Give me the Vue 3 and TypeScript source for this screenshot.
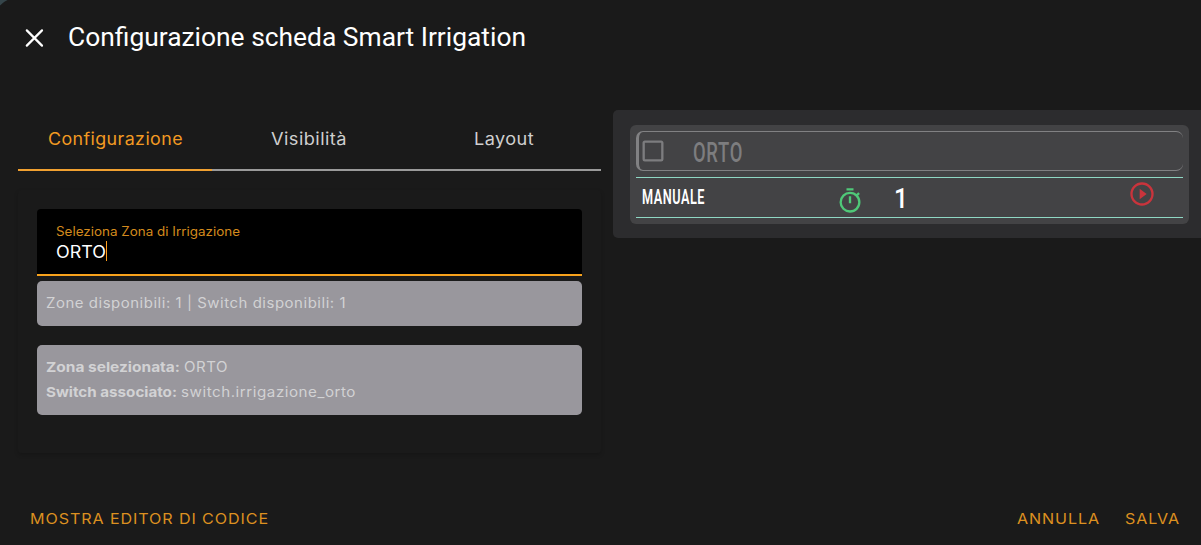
<script setup lang="ts">
import type { Directive } from 'vue'

interface Tab {
  label: string
  width: number
  active: boolean
}

const tabs: Tab[] = [
  { label: 'Configurazione', width: 135, active: true },
  { label: 'Visibilità', width: 76, active: false },
  { label: 'Layout', width: 60, active: false },
]

// Stretches or condenses a label to the given width in pixels.
const vFit: Directive<HTMLElement, number> = {
  mounted(el, { value }) {
    const natural = el.getBoundingClientRect().width
    el.style.width = `${value}px`
    el.style.transform = `scaleX(${value / natural})`
  },
}
</script>

<template>
  <div class="dialog">
    <svg class="corner" width="8" height="6" viewBox="0 0 8 6"><path d="M0 0H7.5Q3 2 0 5.5Z" /></svg>

    <header class="header">
      <svg class="close" viewBox="0 0 28 28"><path d="M6.8 6.4 22 21.6M22 6.4 6.8 21.6" /></svg>
      <h1><span v-fit="458" class="fit">Configurazione scheda Smart Irrigation</span></h1>
    </header>

    <main class="body">
      <section class="editor">
        <nav class="tabs">
          <div v-for="t in tabs" :key="t.label" class="tab" :class="{ active: t.active }">
            <span v-fit="t.width" class="fit">{{ t.label }}</span>
          </div>
        </nav>
        <div class="panel">
          <div class="field">
            <div class="label"><span v-fit="184" class="fit">Seleziona Zona di Irrigazione</span></div>
            <div class="value"><span v-fit="50" class="fit">ORTO</span><i class="caret"></i></div>
          </div>
          <div class="info counts"><span v-fit="300" class="fit">Zone disponibili: 1 | Switch disponibili: 1</span></div>
          <div class="info selection">
            <div class="line"><b v-fit="134" class="fit">Zona selezionata:</b><span v-fit="44" class="fit">ORTO</span></div>
            <div class="line"><b v-fit="131" class="fit">Switch associato:</b><span v-fit="175" class="fit">switch.irrigazione_orto</span></div>
          </div>
        </div>
      </section>

      <aside class="preview">
        <div class="card">
          <div class="zone">
            <svg class="icon" viewBox="0 0 24 24"><path d="M19,3H5C3.89,3 3,3.89 3,5V19A2,2 0 0,0 5,21H19A2,2 0 0,0 21,19V5C21,3.89 20.1,3 19,3M19,5V19H5V5H19Z" /></svg>
            <span v-fit="50" class="fit zone-name">ORTO</span>
          </div>
          <div class="manual">
            <div class="manual-name"><span v-fit="63" class="fit">MANUALE</span></div>
            <svg class="icon timer" viewBox="0 0 24 24"><path d="M12,20A7,7 0 0,1 5,13A7,7 0 0,1 12,6A7,7 0 0,1 19,13A7,7 0 0,1 12,20M19.03,7.39L20.45,5.97C20,5.46 19.55,5 19.04,4.56L17.62,6C16.07,4.74 14.12,4 12,4A9,9 0 0,0 3,13A9,9 0 0,0 12,22C17,22 21,17.97 21,13C21,10.88 20.26,8.93 19.03,7.39M11,14H13V8H11M15,1H9V3H15V1Z" /></svg>
            <span v-fit="14" class="fit minutes">1</span>
            <svg class="icon play" viewBox="0 0 24 24"><path d="M12,20C7.59,20 4,16.41 4,12C4,7.59 7.59,4 12,4C16.41,4 20,7.59 20,12C20,16.41 16.41,20 12,20M12,2A10,10 0 0,0 2,12A10,10 0 0,0 12,22A10,10 0 0,0 22,12A10,10 0 0,0 12,2M10,16.5L16,12L10,7.5V16.5Z" /></svg>
          </div>
        </div>
      </aside>
    </main>

    <footer class="footer">
      <span v-fit="239" class="fit">MOSTRA EDITOR DI CODICE</span>
      <span v-fit="83" class="fit cancel">ANNULLA</span>
      <span v-fit="55" class="fit">SALVA</span>
    </footer>
  </div>
</template>

<style>
html,
body {
  margin: 0;
  background: #1a1a1a;
}
</style>

<style scoped>
.dialog {
  position: relative;
  display: flex;
  flex-direction: column;
  width: 1201px;
  height: 545px;
  overflow: hidden;
  box-sizing: border-box;
  background: #1a1a1a;
  font-family: Inter, "Open Sans", sans-serif;
}
.corner {
  position: absolute;
  top: 0;
  left: 0;
  fill: #35454a;
}
.fit {
  display: inline-block;
  flex: none;
  white-space: nowrap;
  transform-origin: 0 50%;
}
.header {
  display: flex;
  align-items: center;
  height: 75px;
  padding-left: 20px;
  margin-bottom: 35px;
}
.close {
  width: 28px;
  height: 28px;
  margin-top: 1px;
  fill: none;
  stroke: #fff;
  stroke-width: 2.2;
  stroke-linecap: round;
}
h1 {
  margin: -1px 0 0 20px;
  font: 400 26px/36px Roboto, sans-serif;
  color: #fff;
}
.body {
  display: flex;
  flex: 1;
  align-items: flex-start;
  gap: 12px;
  padding-left: 18px;
}
.editor {
  width: 583px;
}
.tabs {
  display: flex;
}
.tab {
  display: flex;
  flex: 1;
  align-items: center;
  justify-content: center;
  height: 61px;
  padding-bottom: 1px;
  box-sizing: border-box;
  border-bottom: 2px solid #9a9a9a;
  font-size: 17px;
  letter-spacing: 0.4px;
  color: #cfcfcf;
}
.tab.active {
  border-color: #f0a030;
  color: #f39a22;
}
.panel {
  height: 244px;
  margin-top: 19px;
  padding: 19px 19px 0;
  border-radius: 4px;
  box-shadow: 0 2px 4px rgba(0, 0, 0, 0.18);
}
.field {
  height: 65px;
  border-bottom: 2px solid #f8a21c;
  border-radius: 4px 4px 0 0;
  background: #000;
  padding: 0 19px;
}
.label {
  padding-top: 13px;
  height: 19px;
  font-size: 12.5px;
  line-height: 19px;
  color: #d38a1d;
}
.value {
  display: flex;
  height: 20px;
  font-size: 16.6px;
  line-height: 22px;
  color: #fff;
}
.caret {
  width: 1px;
  height: 20px;
  background: #ff9f1e;
}
.info {
  box-sizing: border-box;
  border-radius: 5px;
  background: #99979d;
  color: #d2d2d4;
  font-size: 13.8px;
  line-height: 25px;
  padding: 10px 9px 0;
  letter-spacing: 0.5px;
}
.counts {
  height: 45px;
  margin-top: 5px;
}
.selection {
  height: 70px;
  margin-top: 19px;
}
.line {
  display: flex;
  gap: 4px;
}
.line b {
  font-weight: 700;
  letter-spacing: 0;
}
.preview {
  flex: 1;
  height: 128px;
  box-sizing: border-box;
  padding: 15px 12px 14px 17px;
  border-radius: 5px 0 0 5px;
  background: #2c2c2e;
}
.card {
  height: 99px;
  box-sizing: border-box;
  padding: 6px;
  border-radius: 6px;
  background: #434345;
  font-family: Roboto, sans-serif;
}
.icon {
  flex: none;
  width: 28px;
  height: 28px;
  fill: currentColor;
}
.zone {
  display: flex;
  align-items: center;
  height: 40px;
  box-sizing: border-box;
  border: solid #818183;
  border-width: 1px 0 1px 3px;
  border-radius: 7px;
  color: #7d7d7f;
}
.zone-name {
  margin: 4px 0 0 26px;
  font-size: 27px;
  font-weight: 500;
  line-height: 32px;
  letter-spacing: 1px;
}
.manual {
  display: flex;
  align-items: center;
  height: 41px;
  margin-top: 6px;
  box-sizing: border-box;
  border-style: solid;
  border-color: #8fd8c4;
  border-width: 1px 0;
  color: #fff;
}
.manual-name {
  width: 194px;
  padding-left: 6px;
  font-size: 19.5px;
  font-weight: 600;
  line-height: 26px;
  letter-spacing: 0.8px;
}
.timer {
  margin-top: 6px;
  color: #4fc878;
}
.minutes {
  margin: 2px 0 0 30px;
  font-size: 28px;
  font-weight: 500;
  line-height: 34px;
}
.play {
  margin: 0 27px 7px auto;
  color: #c9343c;
}
.footer {
  display: flex;
  align-items: center;
  height: 53px;
  padding: 0 21px 0 30px;
  font-size: 14.2px;
  letter-spacing: 0.8px;
  color: #dc9020;
}
.cancel {
  margin: 0 25px 0 auto;
}
</style>
